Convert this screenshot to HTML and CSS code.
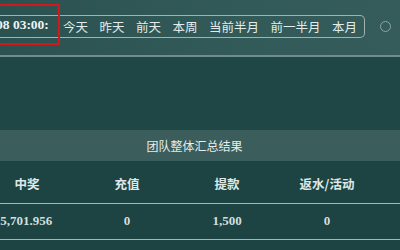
FILE: index.html
```html
<!DOCTYPE html>
<html lang="zh">
<head>
<meta charset="utf-8">
<link rel="stylesheet" href="styles.css">
</head>
<body>
<div class="page">
  <div class="toolbar">
    <div class="range">
      <div class="date"><span class="date-text">08 03:00:00</span></div>
      <div class="tabs">
        <span class="tab">今天</span>
        <span class="tab">昨天</span>
        <span class="tab">前天</span>
        <span class="tab">本周</span>
        <span class="tab">当前半月</span>
        <span class="tab">前一半月</span>
        <span class="tab">本月</span>
      </div>
    </div>
    <div class="radio"></div>
    <div class="highlight"></div>
  </div>
  <div class="spacer"></div>
  <div class="summary">团队整体汇总结果</div>
  <table class="stats">
    <thead>
      <tr><th>中奖</th><th>充值</th><th>提款</th><th>返水/活动</th><th>手续费</th></tr>
    </thead>
    <tbody>
      <tr><td class="first">15,701.956</td><td>0</td><td>1,500</td><td>0</td><td>0</td></tr>
    </tbody>
  </table>
</div>
</body>
</html>
```
FILE: styles.css
```css
html, body {
  margin: 0;
  padding: 0;
  overflow: hidden;
  width: 400px;
  height: 250px;
  background: #1d4443;
}
.page {
  width: 400px;
  height: 250px;
  overflow: hidden;
  font-family: "Noto Sans CJK SC", "Noto Sans", sans-serif;
}
.toolbar {
  position: relative;
  height: 55px;
  display: flex;
  align-items: flex-start;
  background: linear-gradient(90deg, #2b5251 0%, #325a58 60%, #355c5a 100%);
  border-bottom: 2px solid #728d8b;
}
.range {
  margin-top: 15px;
  margin-left: -4px;
  height: 21px;
  display: flex;
  align-items: center;
  border: 1.5px solid #9fb3b1;
  border-left: none;
  border-radius: 0 5px 5px 0;
  padding-right: 7px;
}
.date {
  width: 57px;
  overflow: hidden;
  white-space: nowrap;
  font-family: "Liberation Serif", serif;
  font-weight: bold;
  font-size: 13.5px;
  color: #eef4f3;
}
.date-text {
  display: inline-block;
  width: 57px;
  overflow: hidden;
  clip-path: inset(0 5px 0 0);
}
.tabs {
  display: flex;
  gap: 11.5px;
  margin-left: 10px;
}
.tab {
  font-size: 12.5px;
  color: #e3ecea;
  white-space: nowrap;
  line-height: 21px;
}
.radio {
  margin-left: 15px;
  margin-top: 21px;
  width: 9px;
  height: 9px;
  border: 1.5px solid #8ea3a1;
  border-radius: 50%;
}
.highlight {
  position: absolute;
  left: -4px;
  top: 4px;
  width: 60px;
  height: 37px;
  border: 2.5px solid #d21818;
}
.spacer {
  height: 73px;
  background: #1f4746;
}
.summary {
  height: 31px;
  line-height: 31px;
  background: #3b5d5b;
  color: #e6eeed;
  font-size: 12px;
  text-align: center;
  padding-right: 11px;
}
.stats {
  margin-left: -23px;
  border-collapse: collapse;
  table-layout: fixed;
  width: 500px;
}
.stats th, .stats td {
  width: 100px;
  text-align: center;
  padding: 0;
  white-space: nowrap;
}
.stats th {
  height: 42px;
  padding-top: 4px;
  box-sizing: border-box;
  font-size: 12.5px;
  font-weight: bold;
  color: #dfe8e7;
  border-bottom: 1.5px solid #a3b7b5;
}
.stats td {
  height: 35px;
  font-family: "Liberation Serif", serif;
  font-weight: bold;
  font-size: 13px;
  color: #d3dfde;
  border-bottom: 1.5px solid #a3b7b5;
}
.stats td.first {
  padding-right: 8px;
}
```
